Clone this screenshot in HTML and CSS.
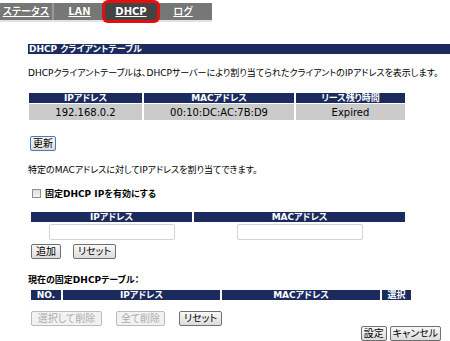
FILE: index.html
```html
<!DOCTYPE html>
<html lang="ja">
<head>
    <meta charset="UTF-8">
    <title>DHCP</title>
    <link rel="stylesheet" href="styles.css">
</head>
<body>
    <!-- タブメニュー -->
    <div class="tabs">
        <a class="tab">ステータス</a>
        <a class="tab sep">LAN</a>
        <a class="tab active">DHCP</a>
        <a class="tab">ログ</a>
    </div>

    <div class="main">
        <div class="title">DHCP クライアントテーブル</div>
        <p class="desc">DHCPクライアントテーブルは、DHCPサーバーにより割り当てられたクライアントのIPアドレスを表示します。</p>

        <table class="grid clients">
            <tr><th class="c1">IPアドレス</th><th class="c2">MACアドレス</th><th class="c3">リース残り時間</th></tr>
            <tr><td>192.168.0.2</td><td>00:10:DC:AC:7B:D9</td><td>Expired</td></tr>
        </table>

        <button class="btn focus refresh">更新</button>

        <p class="desc2">特定のMACアドレスに対してIPアドレスを割り当てできます。</p>

        <label class="check"><input type="checkbox"> 固定DHCP IPを有効にする</label>

        <table class="grid fixed">
            <tr><th class="f1">IPアドレス</th><th>MACアドレス</th></tr>
            <tr><td><input class="field" type="text"></td><td><input class="field" type="text"></td></tr>
        </table>
        <div class="btnrow">
            <button class="btn">追加</button>
            <button class="btn">リセット</button>
        </div>

        <div class="subtitle">現在の固定DHCPテーブル：</div>
        <table class="grid current">
            <tr><th class="n1">NO.</th><th class="n2">IPアドレス</th><th class="n3">MACアドレス</th><th class="n4">選択</th></tr>
        </table>
        <div class="btnrow del">
            <button class="btn wide1" disabled>選択して削除</button>
            <button class="btn wide2" disabled>全て削除</button>
            <button class="btn">リセット</button>
        </div>
        <div class="apply">
            <button class="btn">設定</button>
            <button class="btn">キャンセル</button>
        </div>
    </div>
</body>
</html>
```

FILE: styles.css
```css
body {
    margin: 0;
    background: #fff;
    font-family: "DejaVu Sans", "Noto Sans CJK JP", sans-serif;
    font-size: 9px;
    font-feature-settings: "palt";
    color: #000;
}
.tabs {
    display: flex;
    width: 212px;
    height: 17px;
    margin-top: 3px;
    background: #777;
    border-bottom: 2px solid #e2e2e2;
}
.tab {
    width: 52px;
    text-align: center;
    color: #fff;
    font-weight: bold;
    font-size: 10px;
    line-height: 17px;
    text-decoration: underline;
    text-shadow: 0 0 1px #333;
}
.tab.sep {
    border-left: 2px solid #999;
    width: 51px;
}
.tab.active {
    background: #444;
    border-radius: 3px;
    box-shadow: 0 0 0 3px #e41010;
}
.main {
    padding-left: 28px;
}
.title {
    margin-top: 22px;
    height: 10px;
    line-height: 10px;
    background: #1b2b5e;
    color: #fff;
    font-weight: bold;
    font-size: 9px;
    padding-left: 1px;
}
.desc {
    margin: 14px 0 0;
    line-height: 11px;
    white-space: nowrap;
}
.grid {
    border-collapse: separate;
    border-spacing: 2px 1px;
    margin-left: -1px;
}
.grid th {
    background: #1b2b5e;
    color: #fff;
    font-size: 9px;
    height: 10px;
    line-height: 10px;
    padding: 0;
}
.grid td {
    padding: 0;
    text-align: center;
    font-size: 10px;
}
.clients {
    margin-top: 13px;
    width: 380px;
}
.clients td {
    background: #cbcbcb;
    height: 16px;
}
.c1 { width: 113px; }
.c2 { width: 150px; }
.btn {
    font-family: inherit;
    font-size: 10px;
    font-feature-settings: "palt";
    white-space: nowrap;
    height: 15px;
    line-height: 11px;
    padding: 0 2px;
    background: linear-gradient(#f8f8f8, #dcdcdc);
    border: 1px solid #707070;
    border-radius: 2px;
    color: #000;
}
.btn:disabled {
    color: #aaa;
    border-color: #bbb;
    background: #f2f2f2;
}
.btn.focus {
    border-color: #4a7ab8;
}
.refresh {
    margin: 15px 0 0 2px;
    display: block;
}
.desc2 {
    margin: 14px 0 0;
    line-height: 11px;
}
.check {
    display: flex;
    align-items: center;
    gap: 4px;
    margin: 11px 0 0 4px;
    font-weight: bold;
}
.check input {
    appearance: none;
    margin: 0;
    width: 9px;
    height: 9px;
    border: 1px solid #8f8f8f;
    background: linear-gradient(#dedede, #f4f4f4);
}
.fixed {
    margin-top: 11px;
    width: 378px;
    margin-left: 1px;
}
.f1 { width: 161px; }
.field {
    width: 124px;
    height: 14px;
    border: 1px solid #d4d4d4;
    border-radius: 2px;
    margin-top: 1px;
    padding: 0;
}
.btnrow {
    display: flex;
    gap: 12px;
    margin: 3px 0 0 3px;
}
.btnrow .btn {
    padding: 0 4px;
}
.subtitle {
    margin-top: 16px;
    font-weight: bold;
    line-height: 11px;
}
.current {
    margin-top: 3px;
    width: 384px;
    margin-left: 1px;
}
.n1 { width: 30px; }
.n2 { width: 157px; }
.n3 { width: 158px; }
.del {
    margin-top: 10px;
    gap: 14px;
}
.btnrow .wide1 { width: 71px; padding: 0; }
.btnrow .wide2 { width: 49px; padding: 0; }
.apply {
    display: flex;
    justify-content: flex-end;
    gap: 3px;
    margin: 0 9px 0 0;
}
```
